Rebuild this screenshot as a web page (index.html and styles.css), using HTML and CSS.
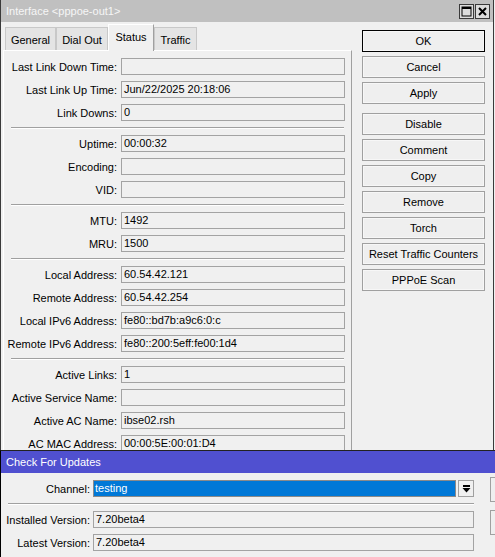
FILE: index.html
```html
<!DOCTYPE html>
<html>
<head>
<meta charset="utf-8">
<link rel="stylesheet" href="styles.css">
</head>
<body>
<div class="screen">
  <div class="win win-top">
    <div class="titlebar titlebar-gray">
      <span class="title">Interface &lt;pppoe-out1&gt;</span>
      <div class="tb-btns">
        <span class="tb-btn"><svg width="11" height="11" viewBox="0 0 11 11"><rect x="1" y="1" width="9" height="9" fill="none" stroke="#000" stroke-width="1"/><rect x="1" y="1" width="9" height="2" fill="#000"/></svg></span>
        <span class="tb-btn"><svg width="11" height="11" viewBox="0 0 11 11"><path d="M2 2 L9 9 M9 2 L2 9" stroke="#000" stroke-width="2"/></svg></span>
      </div>
    </div>
    <div class="win-body">
      <div class="tabarea">
        <div class="tabs">
          <div class="tab tab-general">General</div>
          <div class="tab tab-dial">Dial Out</div>
          <div class="tab tab-status active">Status</div>
          <div class="tab tab-traffic">Traffic</div>
        </div>
        <div class="panel">
          <div class="form">
            <label>Last Link Down Time:</label><div class="field"></div>
            <label>Last Link Up Time:</label><div class="field">Jun/22/2025 20:18:06</div>
            <label>Link Downs:</label><div class="field">0</div>
            <div class="sep"></div>
            <label>Uptime:</label><div class="field">00:00:32</div>
            <label>Encoding:</label><div class="field"></div>
            <label>VID:</label><div class="field"></div>
            <div class="sep"></div>
            <label>MTU:</label><div class="field">1492</div>
            <label>MRU:</label><div class="field">1500</div>
            <div class="sep"></div>
            <label>Local Address:</label><div class="field">60.54.42.121</div>
            <label>Remote Address:</label><div class="field">60.54.42.254</div>
            <label>Local IPv6 Address:</label><div class="field">fe80::bd7b:a9c6:0:c</div>
            <label>Remote IPv6 Address:</label><div class="field">fe80::200:5eff:fe00:1d4</div>
            <div class="sep"></div>
            <label>Active Links:</label><div class="field">1</div>
            <label>Active Service Name:</label><div class="field"></div>
            <label>Active AC Name:</label><div class="field">ibse02.rsh</div>
            <label>AC MAC Address:</label><div class="field">00:00:5E:00:01:D4</div>
          </div>
        </div>
      </div>
      <div class="btncol">
        <div class="btn btn-default">OK</div>
        <div class="btn">Cancel</div>
        <div class="btn">Apply</div>
        <div class="btn group-start">Disable</div>
        <div class="btn">Comment</div>
        <div class="btn">Copy</div>
        <div class="btn">Remove</div>
        <div class="btn">Torch</div>
        <div class="btn">Reset Traffic Counters</div>
        <div class="btn">PPPoE Scan</div>
      </div>
    </div>
  </div>
  <div class="win win-bottom">
    <div class="titlebar titlebar-blue">
      <span class="title">Check For Updates</span>
    </div>
    <div class="win-body2">
      <div class="form2">
        <label>Channel:</label>
        <div class="select-row">
          <div class="select">testing</div>
          <div class="dd"><svg width="9" height="8" viewBox="0 0 9 8"><rect x="1" y="0" width="7" height="2" fill="#000"/><polygon points="0.5,3 8.5,3 4.5,7.5" fill="#000"/></svg></div>
        </div>
        <div class="sep2"></div>
        <label>Installed Version:</label><div class="field">7.20beta4</div>
        <label>Latest Version:</label><div class="field">7.20beta4</div>
      </div>
      <div class="btncol2">
        <div class="btn2 btn-default"></div>
        <div class="btn2"></div>
      </div>
    </div>
  </div>
</div>
</body>
</html>
```
FILE: styles.css
```css
html, body {
  margin: 0;
  padding: 0;
  overflow: hidden;
}
body {
  width: 495px;
  height: 557px;
  background: #f0f0f0;
  font-family: "Liberation Sans", Arial, sans-serif;
  font-size: 11px;
  color: #000;
}
.screen {
  width: 495px;
  height: 557px;
  overflow: hidden;
}
.win {
  box-sizing: border-box;
  background: #f0f0f0;
}
.win-top {
  width: 494px;
  height: 450px;
  overflow: hidden;
  border-left: 1px solid #3a3a3a;
  border-right: 1px solid #3a3a3a;
}
.titlebar {
  height: 22px;
  display: flex;
  align-items: center;
  justify-content: space-between;
  padding-left: 5px;
  box-sizing: border-box;
}
.titlebar-gray {
  background: #c0c0c0;
  color: #f6f6f6;
  padding-right: 3px;
}
.titlebar-blue {
  background: #5050d0;
  color: #ffffff;
}
.title {
  font-size: 11px;
}
.tb-btns {
  display: flex;
  gap: 1px;
}
.tb-btn {
  width: 15px;
  height: 15px;
  box-sizing: border-box;
  border: 1px solid #3a3a3a;
  background: #dcdcdc;
  display: flex;
  align-items: center;
  justify-content: center;
}
.win-body {
  display: flex;
  align-items: flex-start;
}
.tabarea {
  width: 349px;
  margin-left: 2px;
  display: flex;
  flex-direction: column;
}
.tabs {
  height: 28px;
  display: flex;
  align-items: flex-end;
  padding-left: 2px;
}
.tab {
  box-sizing: border-box;
  height: 23px;
  background: #e4e4e4;
  border: 1px solid #c8c8c8;
  border-bottom: none;
  display: flex;
  align-items: center;
  justify-content: center;
  padding-top: 2px;
}
.tab-general { width: 51px; }
.tab-dial { width: 52px; }
.tab-status { width: 46px; }
.tab-traffic { width: 43px; }
.tab.active {
  height: 27px;
  margin-bottom: -1px;
  background: #f0f0f0;
  border-top: 1px solid #ffffff;
  border-left: 1px solid #ffffff;
  border-right: 1px solid #a0a0a0;
  position: relative;
  z-index: 1;
  padding-top: 0;
  padding-bottom: 3px;
}
.panel {
  height: 400px;
  box-sizing: border-box;
  border-top: 1px solid #ffffff;
  border-left: 1px solid #ffffff;
  border-right: 1px solid #a0a0a0;
  padding-top: 7px;
}
.form {
  display: grid;
  grid-template-columns: 113px 224px;
  column-gap: 4px;
  row-gap: 6px;
}
.form label, .form2 label {
  text-align: right;
  align-self: center;
  white-space: nowrap;
}
.field {
  height: 17px;
  box-sizing: border-box;
  border: 1px solid #a3a3a3;
  background: #f0f0f0;
  padding-left: 2px;
  line-height: 15px;
  white-space: nowrap;
  overflow: hidden;
}
.sep {
  grid-column: 1 / -1;
  margin-left: 7px;
  margin-right: 1px;
  height: 0;
  border-top: 1px solid #a0a0a0;
  border-bottom: 1px solid #ffffff;
}
.btncol {
  width: 123px;
  margin-left: 10px;
  margin-top: 8px;
  display: flex;
  flex-direction: column;
  gap: 4px;
}
.btn {
  height: 22px;
  box-sizing: border-box;
  border: 1px solid #a0a0a0;
  background: #efefef;
  box-shadow: inset 0 0 0 1px #f7f7f7;
  display: flex;
  align-items: center;
  justify-content: center;
  white-space: nowrap;
}
.btn-default {
  border: 1px solid #000;
}
.group-start {
  margin-top: 5px;
}
.win-bottom {
  width: 620px;
  height: 107px;
  border-left: 1px solid #000;
  border-top: 1px solid #222;
}
.win-body2 {
  display: flex;
  align-items: flex-start;
  padding-top: 7px;
}
.form2 {
  display: grid;
  grid-template-columns: 89px 381px;
  column-gap: 3px;
  row-gap: 6px;
}
.select-row {
  display: flex;
  gap: 2px;
}
.select {
  width: 363px;
  height: 17px;
  box-sizing: border-box;
  border: 1px solid #8a8a8a;
  background: #0078d7;
  color: #fff;
  padding-left: 1px;
  line-height: 15px;
}
.dd {
  width: 16px;
  height: 17px;
  box-sizing: border-box;
  border: 1px solid #a0a0a0;
  background: #f0f0f0;
  display: flex;
  align-items: center;
  justify-content: center;
}
.sep2 {
  grid-column: 1 / -1;
  margin-left: 7px;
  height: 0;
  border-top: 1px solid #a0a0a0;
  border-bottom: 1px solid #ffffff;
}
.btncol2 {
  margin-left: 16px;
  margin-top: -3px;
  display: flex;
  flex-direction: column;
  gap: 8px;
  width: 90px;
}
.btn2 {
  height: 25px;
  box-sizing: border-box;
  border: 1px solid #a0a0a0;
  background: #efefef;
}
```
